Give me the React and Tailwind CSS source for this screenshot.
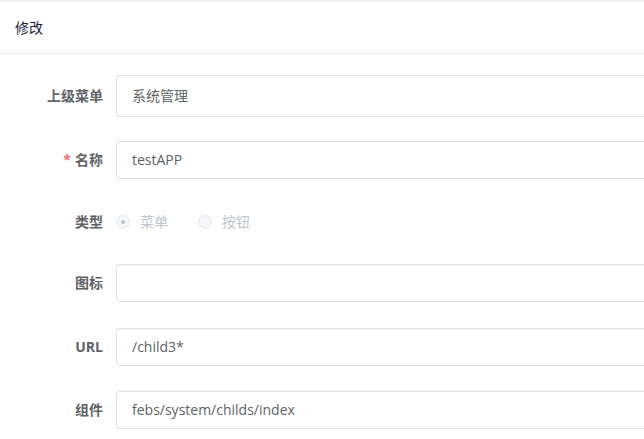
import React from 'react';

const font = { fontFamily: '"Open Sans", "Noto Sans CJK SC", sans-serif' };

const Label = ({ children, required }) => (
  <label className="w-[116px] shrink-0 pr-[13px] text-right text-sm font-bold text-[#606266]">
    {required && <span className="mr-1 text-[#f56c6c]">*</span>}
    {children}
  </label>
);

const TextInput = ({ value, tall }) => (
  <div
    className={`flex w-[600px] shrink-0 items-center rounded border border-[#dcdfe6] bg-white px-[15px] text-sm text-[#606266] ${tall ? 'h-[42px]' : 'h-[38px]'}`}
  >
    {value}
  </div>
);

const Radio = ({ label, checked }) => (
  <span className="flex items-center gap-[10px] text-sm text-[#c0c4cc]">
    <span className="flex h-[14px] w-[14px] items-center justify-center rounded-full border border-[#e4e7ed] bg-[#f5f7fa]">
      {checked && <span className="h-[4px] w-[4px] rounded-full bg-[#c0c4cc]" />}
    </span>
    {label}
  </span>
);

export default function App() {
  return (
    <div className="h-[439px] w-[644px] overflow-hidden bg-[#f0f2f5] pt-[2px]" style={font}>
      <div className="h-full bg-white">
        {/* card header */}
        <div className="flex h-[52px] items-center border-b border-[#e8eaec] px-[15px] text-sm text-[#17233d]">
          修改
        </div>

        <div className="pt-[21px]">
          <div className="flex items-center">
            <Label>上级菜单</Label>
            <TextInput value="系统管理" tall />
          </div>
          <div className="mt-[24px] flex items-center">
            <Label required>名称</Label>
            <TextInput value="testAPP" />
          </div>
          <div className="mt-[24px] flex h-[38px] items-center">
            <Label>类型</Label>
            <div className="flex items-center gap-[30px]">
              <Radio label="菜单" checked />
              <Radio label="按钮" />
            </div>
          </div>
          <div className="mt-[23px] flex items-center">
            <Label>图标</Label>
            <TextInput value="" />
          </div>
          <div className="mt-[26px] flex items-center">
            <Label>URL</Label>
            <TextInput value="/child3*" />
          </div>
          <div className="mt-[25px] flex items-center">
            <Label>组件</Label>
            <TextInput value="febs/system/childs/index" />
          </div>
        </div>
      </div>
    </div>
  );
}
